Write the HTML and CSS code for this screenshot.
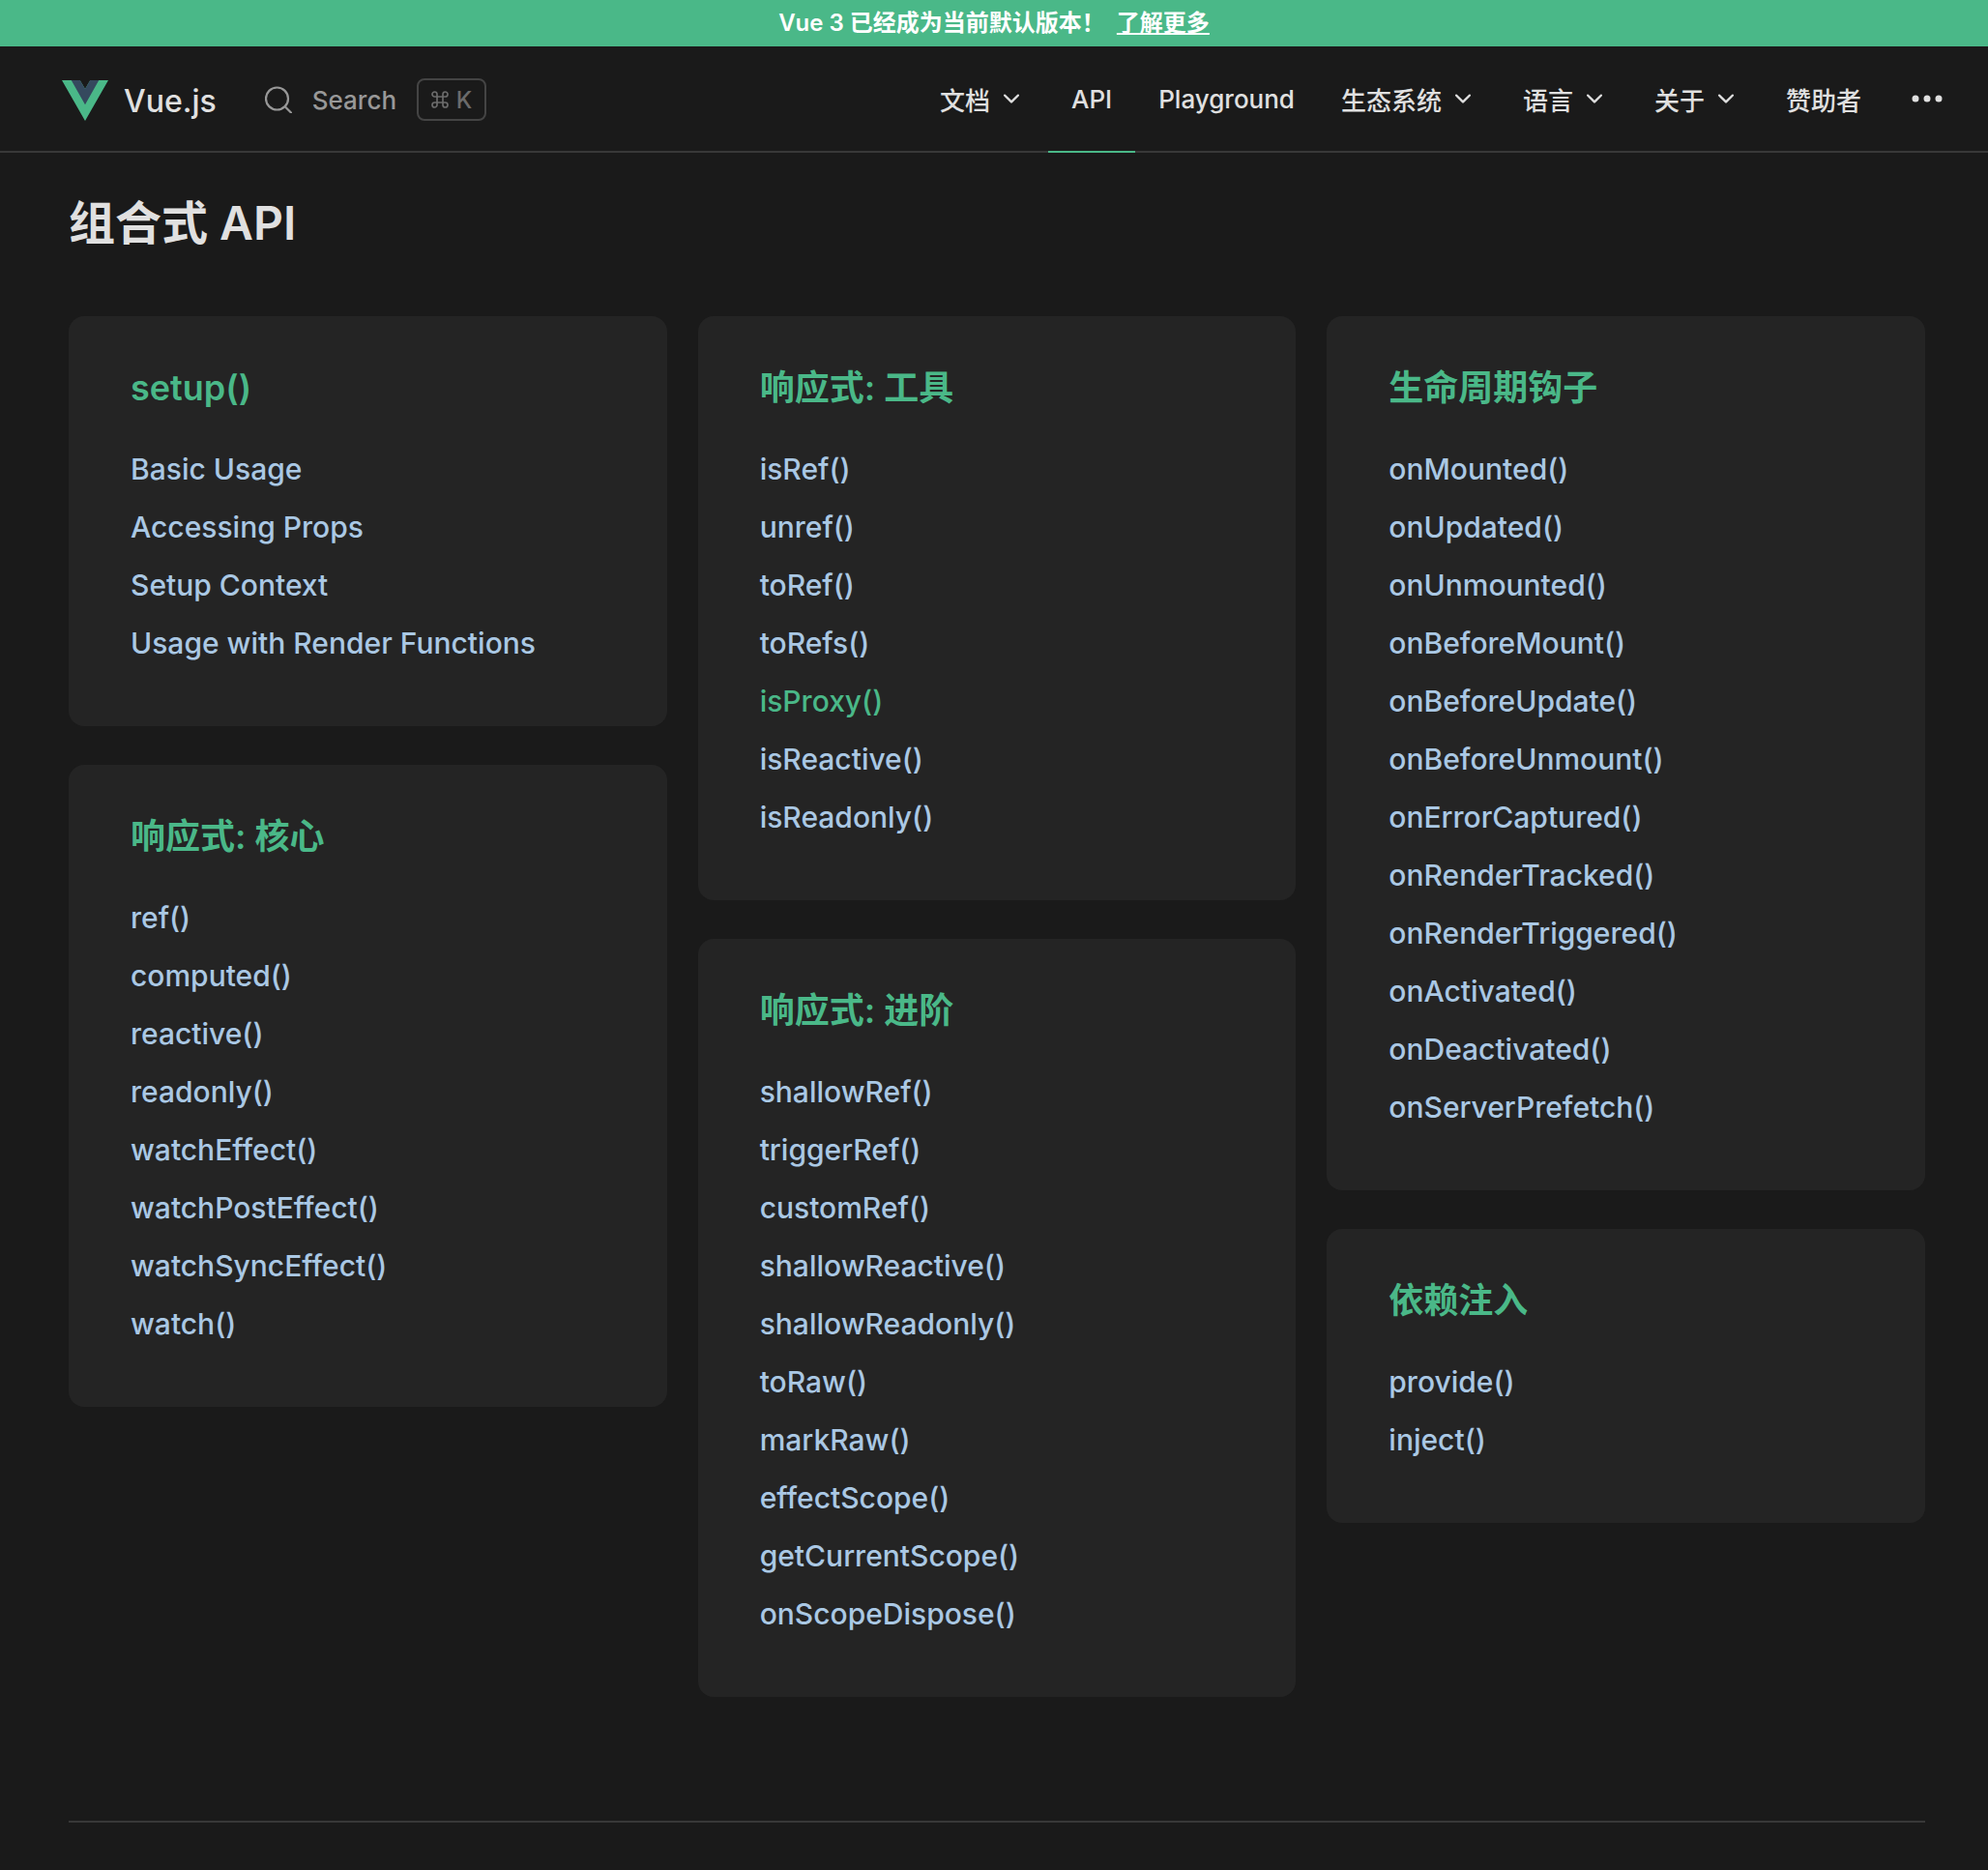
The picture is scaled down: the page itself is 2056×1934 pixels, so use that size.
FILE: index.html
```html
<!DOCTYPE html>
<html lang="zh-CN">
<head>
<meta charset="utf-8">
<meta name="viewport" content="width=device-width, initial-scale=1">
<title>API 参考 | Vue.js</title>
<link rel="stylesheet" href="styles.css">
</head>
<body>
<svg class="sprite" aria-hidden="true">
  <symbol id="chevron" viewBox="0 0 24 24"><path d="M12 16a1 1 0 0 1-.7-.3l-6-6a1 1 0 0 1 1.4-1.4l5.3 5.3 5.3-5.3a1 1 0 0 1 1.4 1.4l-6 6a1 1 0 0 1-.7.3z" fill="currentColor"/></symbol>
</svg>
<div class="banner"><span>Vue 3 已经成为当前默认版本！</span><a href="#more">了解更多</a></div>
<header class="navbar">
  <a class="logo" href="#home">
    <svg class="logo-mark" viewBox="0 0 128 112" aria-hidden="true"><path d="M0 0h50l14 24L78 0h50L64 112z" fill="#4ab888"/><path d="M26 0h24l14 24L78 0h24L64 67z" fill="#35495e"/></svg>
    <span>Vue.js</span>
  </a>
  <button class="search" type="button">
    <svg class="search-icon" viewBox="0 0 28 28" fill="none" stroke="currentColor" stroke-width="2.200" stroke-linecap="round" aria-hidden="true"><circle cx="12.500" cy="13" r="11.500"/><path d="M21 21.500l6 6"/></svg>
    <span>Search</span>
    <kbd class="keys"><svg class="cmd" viewBox="0 0 18 18" fill="none" stroke="currentColor" stroke-width="1.700" aria-label="⌘"><path d="M6 6h6v6H6zM6 6V3.500A2.500 2.500 0 1 0 3.500 6zM12 6h2.500A2.500 2.500 0 1 0 12 3.500zM12 12v2.500a2.500 2.500 0 1 0 2.500-2.500zM6 12H3.500A2.500 2.500 0 1 0 6 14.500z"/></svg><span>K</span></kbd>
  </button>
  <nav class="menu" aria-label="主导航">
    <button class="menu-item" type="button">文档<svg class="chevron" aria-hidden="true"><use href="#chevron"/></svg></button>
    <a class="menu-item active" href="#api">API</a>
    <a class="menu-item" href="#playground">Playground</a>
    <button class="menu-item" type="button">生态系统<svg class="chevron" aria-hidden="true"><use href="#chevron"/></svg></button>
    <button class="menu-item" type="button">语言<svg class="chevron" aria-hidden="true"><use href="#chevron"/></svg></button>
    <button class="menu-item" type="button">关于<svg class="chevron" aria-hidden="true"><use href="#chevron"/></svg></button>
    <a class="menu-item" href="#sponsor">赞助者</a>
    <button class="menu-item" type="button" aria-label="更多"><svg class="dots" viewBox="0 0 40 40" fill="currentColor" aria-hidden="true"><circle cx="8" cy="20" r="3.500"/><circle cx="20" cy="20" r="3.500"/><circle cx="32" cy="20" r="3.500"/></svg></button>
  </nav>
</header>
<main class="content">
  <section class="api-section">
    <h2 class="section-title">组合式 API</h2>
    <div class="columns">
      <div class="column">
        <article class="card">
          <h3>setup()</h3>
          <ul>
            <li><a href="#basic-usage">Basic Usage</a></li>
            <li><a href="#accessing-props">Accessing Props</a></li>
            <li><a href="#setup-context">Setup Context</a></li>
            <li><a href="#render-functions">Usage with Render Functions</a></li>
          </ul>
        </article>
        <article class="card">
          <h3>响应式: 核心</h3>
          <ul>
            <li><a href="#ref">ref()</a></li>
            <li><a href="#computed">computed()</a></li>
            <li><a href="#reactive">reactive()</a></li>
            <li><a href="#readonly">readonly()</a></li>
            <li><a href="#watcheffect">watchEffect()</a></li>
            <li><a href="#watchposteffect">watchPostEffect()</a></li>
            <li><a href="#watchsynceffect">watchSyncEffect()</a></li>
            <li><a href="#watch">watch()</a></li>
          </ul>
        </article>
      </div>
      <div class="column">
        <article class="card">
          <h3>响应式: 工具</h3>
          <ul>
            <li><a href="#isref">isRef()</a></li>
            <li><a href="#unref">unref()</a></li>
            <li><a href="#toref">toRef()</a></li>
            <li><a href="#torefs">toRefs()</a></li>
            <li><a class="current" href="#isproxy">isProxy()</a></li>
            <li><a href="#isreactive">isReactive()</a></li>
            <li><a href="#isreadonly">isReadonly()</a></li>
          </ul>
        </article>
        <article class="card">
          <h3>响应式: 进阶</h3>
          <ul>
            <li><a href="#shallowref">shallowRef()</a></li>
            <li><a href="#triggerref">triggerRef()</a></li>
            <li><a href="#customref">customRef()</a></li>
            <li><a href="#shallowreactive">shallowReactive()</a></li>
            <li><a href="#shallowreadonly">shallowReadonly()</a></li>
            <li><a href="#toraw">toRaw()</a></li>
            <li><a href="#markraw">markRaw()</a></li>
            <li><a href="#effectscope">effectScope()</a></li>
            <li><a href="#getcurrentscope">getCurrentScope()</a></li>
            <li><a href="#onscopedispose">onScopeDispose()</a></li>
          </ul>
        </article>
      </div>
      <div class="column">
        <article class="card">
          <h3>生命周期钩子</h3>
          <ul>
            <li><a href="#onmounted">onMounted()</a></li>
            <li><a href="#onupdated">onUpdated()</a></li>
            <li><a href="#onunmounted">onUnmounted()</a></li>
            <li><a href="#onbeforemount">onBeforeMount()</a></li>
            <li><a href="#onbeforeupdate">onBeforeUpdate()</a></li>
            <li><a href="#onbeforeunmount">onBeforeUnmount()</a></li>
            <li><a href="#onerrorcaptured">onErrorCaptured()</a></li>
            <li><a href="#onrendertracked">onRenderTracked()</a></li>
            <li><a href="#onrendertriggered">onRenderTriggered()</a></li>
            <li><a href="#onactivated">onActivated()</a></li>
            <li><a href="#ondeactivated">onDeactivated()</a></li>
            <li><a href="#onserverprefetch">onServerPrefetch()</a></li>
          </ul>
        </article>
        <article class="card">
          <h3>依赖注入</h3>
          <ul>
            <li><a href="#provide">provide()</a></li>
            <li><a href="#inject">inject()</a></li>
          </ul>
        </article>
      </div>
    </div>
  </section>
</main>
</body>
</html>
```
FILE: styles.css
```css
:root {
  --bg: #1a1a1a;
  --card: #242424;
  --green: #4ab888;
  --text: #e0e0e0;
  --muted: #989898;
  --divider: #383838;
  --link: #aac8e4;
}

* {
  box-sizing: border-box;
}

body {
  margin: 0;
  background: var(--bg);
  color: var(--text);
  font-family: Inter, "Noto Sans CJK SC", sans-serif;
  font-optical-sizing: none;
  font-variant-ligatures: none;
  font-size: 26px;
  font-weight: 500;
}

a {
  color: inherit;
  text-decoration: none;
}

button {
  padding: 0;
  border: 0;
  background: none;
  color: inherit;
  font: inherit;
  font-optical-sizing: none;
  cursor: pointer;
}

.sprite {
  display: none;
}

.banner {
  display: flex;
  justify-content: center;
  gap: 12px;
  height: 48px;
  background: var(--green);
  color: #fff;
  font-size: 24px;
  font-weight: 600;
  line-height: 48px;
}

.banner a {
  text-decoration: underline;
}

.navbar {
  display: flex;
  align-items: center;
  height: 110px;
  padding: 0 19px 0 64px;
  border-bottom: 2px solid var(--divider);
}

.logo {
  display: flex;
  align-items: center;
  gap: 16px;
  padding-top: 4px;
  font-size: 32px;
}

.logo-mark {
  width: 48px;
  height: 42px;
}

.search {
  display: flex;
  align-items: center;
  gap: 21px;
  margin-left: 50px;
  padding-top: 2px;
  color: var(--muted);
}

.search-icon {
  width: 28px;
  height: 28px;
}

.keys {
  display: flex;
  align-items: center;
  justify-content: center;
  gap: 8px;
  width: 72px;
  height: 44px;
  border: 2px solid #444;
  border-radius: 8px;
  color: #6b6b6b;
  font: inherit;
  font-size: 24px;
}

.cmd {
  width: 18px;
  height: 18px;
}

.menu {
  display: flex;
  align-self: flex-end;
  margin-bottom: -2px;
  margin-left: auto;
}

.menu-item {
  display: flex;
  align-items: center;
  gap: 8px;
  height: 110px;
  padding: 0 24px;
  border-bottom: 2px solid transparent;
}

.menu-item.active {
  border-color: var(--green);
}

.chevron {
  width: 28px;
  height: 28px;
}

.dots {
  width: 40px;
  height: 40px;
}

.content {
  padding: 41px 65px 48px 71px;
}

.api-section {
  padding-bottom: 128px;
  border-bottom: 2px solid var(--divider);
}

.section-title {
  margin: 0 0 64px;
  font-size: 48px;
  font-weight: 600;
  line-height: 64px;
}

.columns {
  display: grid;
  grid-template-columns: repeat(3, 1fr);
  gap: 32px;
}

.column {
  display: flex;
  flex-direction: column;
  gap: 40px;
}

.card {
  padding: 56px 64px;
  border-radius: 16px;
  background: var(--card);
}

.card h3 {
  margin: 0 0 36px;
  color: var(--green);
  font-size: 36px;
  font-weight: 600;
  line-height: 36px;
}

.card ul {
  margin: 0;
  padding: 0;
  list-style: none;
}

.card li {
  color: var(--link);
  font-size: 30px;
  line-height: 60px;
}

.card .current,
.card a:hover {
  color: var(--green);
}
```
